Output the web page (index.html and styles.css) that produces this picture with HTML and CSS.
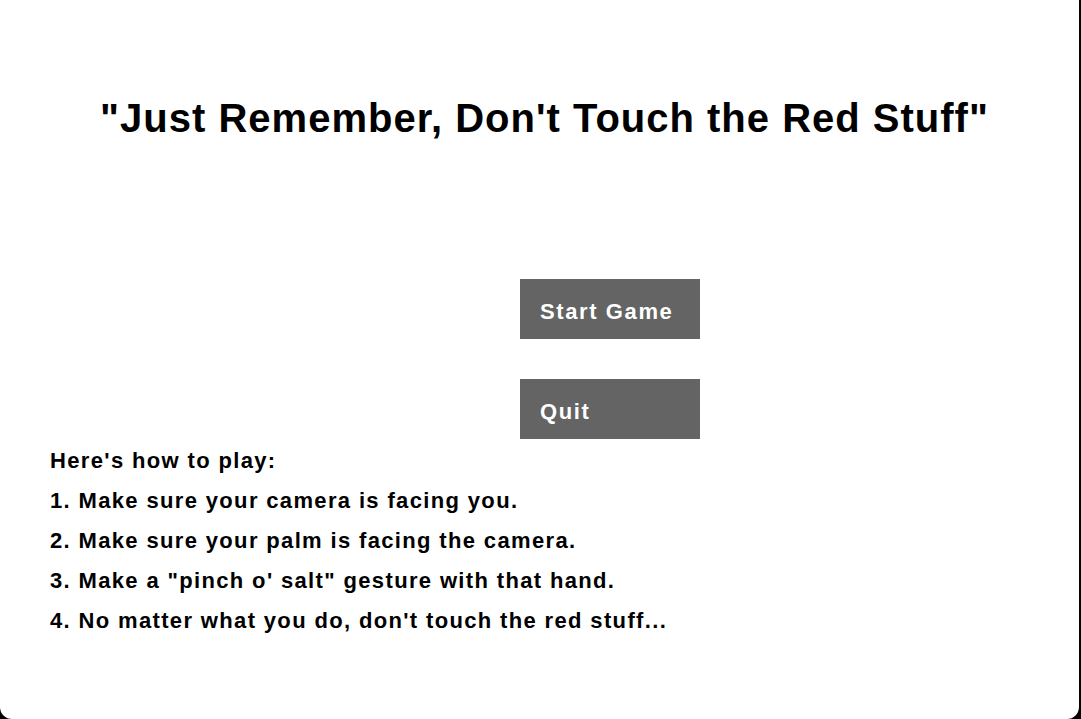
FILE: index.html
```html
<!DOCTYPE html>
<html>
<head>
<meta charset="utf-8">
<link rel="stylesheet" href="styles.css">
</head>
<body>
<div class="screen">
  <h1 class="title">"Just Remember, Don't Touch the Red Stuff"</h1>
  <div class="menu">
    <button class="btn">Start Game</button>
    <button class="btn">Quit</button>
  </div>
  <div class="howto">
    <p>Here's how to play:</p>
    <p>1. Make sure your camera is facing you.</p>
    <p>2. Make sure your palm is facing the camera.</p>
    <p>3. Make a "pinch o' salt" gesture with that hand.</p>
    <p>4. No matter what you do, don't touch the red stuff...</p>
  </div>
</div>
</body>
</html>
```
FILE: styles.css
```css
html, body {
  margin: 0;
  padding: 0;
  background: #000;
  width: 1081px;
  height: 719px;
  overflow: hidden;
}
.screen {
  width: 1079px;
  height: 719px;
  background: #fff;
  border-radius: 0 0 12px 12px;
  font-family: "Liberation Sans", Arial, sans-serif;
  font-weight: bold;
  color: #000;
  box-sizing: border-box;
  padding-top: 94px;
}
.title {
  margin: 0;
  font-size: 40px;
  line-height: 48px;
  letter-spacing: 1px;
  text-align: center;
  padding-left: 10px;
}
.menu {
  display: flex;
  flex-direction: column;
  align-items: flex-start;
  gap: 40px;
  margin-top: 137px;
  margin-left: 520px;
}
.btn {
  width: 180px;
  height: 60px;
  border: none;
  background: #646464;
  color: #fff;
  font-family: inherit;
  font-weight: bold;
  font-size: 22px;
  letter-spacing: 1.6px;
  text-align: left;
  padding: 6px 0 0 20px;
  margin: 0;
}
.howto {
  margin-left: 50px;
  padding-top: 2px;
  font-size: 22px;
  letter-spacing: 1.35px;
}
.howto p {
  margin: 0;
  line-height: 40px;
}
```
